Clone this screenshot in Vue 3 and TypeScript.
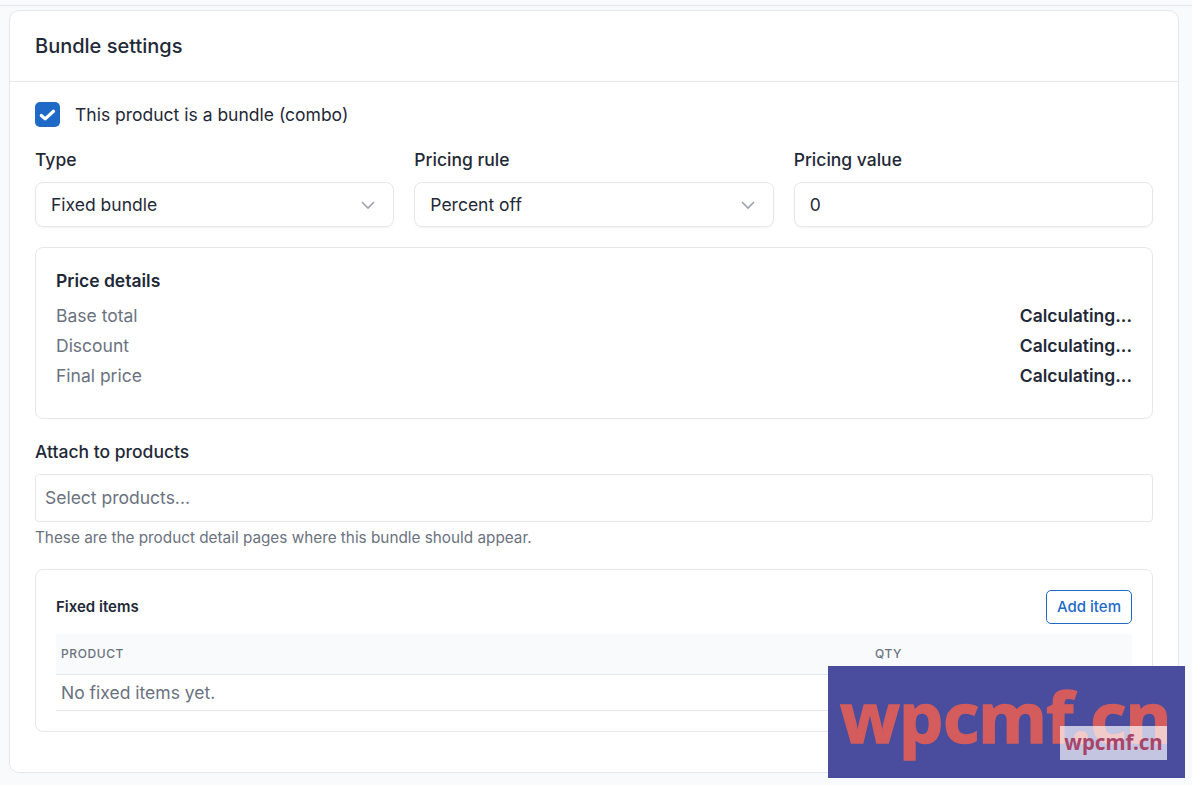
<script setup lang="ts">
const rows: string[] = ['Base total', 'Discount', 'Final price']
</script>

<template>
  <div class="page">
    <div class="topbar"></div>
    <section class="card">
      <header class="card-head"><h2>Bundle settings</h2></header>
      <div class="card-body">
        <label class="check">
          <span class="box">
            <svg width="25" height="25" viewBox="0 0 25 25"><path d="M6.3 13.5l3.9 3.4 8.3-7.6" fill="none" stroke="#fff" stroke-width="3.2" stroke-linecap="round" stroke-linejoin="round"/></svg>
          </span>
          <span>This product is a bundle (combo)</span>
        </label>
        <div class="fields">
          <div class="field">
            <div class="label">Type</div>
            <div class="control">
              <span>Fixed bundle</span>
              <svg class="chev" width="16" height="16" viewBox="0 0 16 16"><path d="M2 5l6 6 6-6" fill="none" stroke="#9ca3af" stroke-width="1.6"/></svg>
            </div>
          </div>
          <div class="field">
            <div class="label">Pricing rule</div>
            <div class="control">
              <span>Percent off</span>
              <svg class="chev" width="16" height="16" viewBox="0 0 16 16"><path d="M2 5l6 6 6-6" fill="none" stroke="#9ca3af" stroke-width="1.6"/></svg>
            </div>
          </div>
          <div class="field">
            <div class="label">Pricing value</div>
            <div class="control"><span>0</span></div>
          </div>
        </div>
        <div class="price">
          <div class="price-title">Price details</div>
          <div v-for="r in rows" :key="r" class="price-row">
            <span class="muted">{{ r }}</span>
            <strong>Calculating...</strong>
          </div>
        </div>
        <div class="label attach">Attach to products</div>
        <div class="picker">Select products...</div>
        <p class="hint">These are the product detail pages where this bundle should appear.</p>
        <div class="items">
          <div class="items-head">
            <span class="items-title">Fixed items</span>
            <button class="add" type="button">Add item</button>
          </div>
          <div class="thead"><span>PRODUCT</span><span>QTY</span></div>
          <div class="empty">No fixed items yet.</div>
        </div>
      </div>
    </section>
    <div class="mark">
      <span class="mark-big">wpcmf.cn</span>
      <span class="mark-small">wpcmf.cn</span>
    </div>
  </div>
</template>

<style>
html, body { margin: 0; background: #f9fafb; }
</style>

<style scoped>
.page {
  position: relative;
  height: 785px;
  overflow: hidden;
  background: #f9fafb;
  font-family: Inter, "Noto Sans", sans-serif;
  color: #1f2937;
}
.topbar { height: 5px; border-bottom: 1px solid #e5e7eb; }
.card {
  box-sizing: border-box;
  width: 1170px;
  height: 763px;
  margin: 4px 0 0 9px;
  background: #fff;
  border: 1px solid #e5e7eb;
  border-radius: 10px;
}
.card-head {
  box-sizing: border-box;
  height: 71px;
  padding: 0 25px;
  display: flex;
  align-items: center;
  border-bottom: 1px solid #e5e7eb;
}
h2 { margin: 0; font-size: 20px; font-weight: 500; color: #1f2937; }
.card-body { padding: 20px 25px 0; }
.check { display: flex; align-items: center; gap: 15px; height: 25px; font-size: 17.5px; }
.box { width: 25px; height: 25px; border-radius: 5px; background: #1f6ac6; display: block; }
.box svg { display: block; }
.fields { display: grid; grid-template-columns: repeat(3, 1fr); gap: 20px; margin-top: 21px; }
.label { font-size: 17.5px; font-weight: 500; line-height: 24px; color: #1f2937; }
.control {
  box-sizing: border-box;
  height: 45px;
  margin-top: 10px;
  padding: 0 15px;
  display: flex;
  align-items: center;
  justify-content: space-between;
  border: 1px solid #e5e7eb;
  border-radius: 8px;
  box-shadow: 0 1px 2px rgba(16, 24, 40, 0.05);
  font-size: 17.5px;
}
.chev { margin-right: 2px; }
.price {
  box-sizing: border-box;
  height: 172px;
  margin-top: 20px;
  padding: 20px;
  border: 1px solid #e5e7eb;
  border-radius: 8px;
}
.price-title { font-size: 17.5px; font-weight: 600; line-height: 26px; color: #1f2937; margin-bottom: 7px; }
.price-row { display: flex; justify-content: space-between; font-size: 17.5px; line-height: 30px; }
.muted { color: #6b7280; }
.price-row strong { font-weight: 600; color: #1f2937; }
.attach { margin-top: 21px; }
.picker {
  box-sizing: border-box;
  height: 48px;
  margin-top: 10px;
  padding: 0 9px 2px;
  display: flex;
  align-items: center;
  border: 1px solid #e5e7eb;
  border-radius: 4px;
  font-size: 17.5px;
  color: #6b7280;
}
.hint { margin: 6px 0 0; font-size: 15.3px; line-height: 20px; color: #6b7280; }
.items {
  box-sizing: border-box;
  height: 163px;
  margin-top: 21px;
  padding: 20px;
  border: 1px solid #e5e7eb;
  border-radius: 8px;
}
.items-head { display: flex; justify-content: space-between; align-items: center; height: 34px; }
.items-title { font-size: 15px; font-weight: 600; line-height: 20px; color: #1f2937; }
.add {
  box-sizing: border-box;
  height: 34px;
  width: 86px;
  padding: 0 0 1px;
  background: #fff;
  border: 1px solid #1f6ac6;
  border-radius: 5px;
  color: #1f6ac6;
  font: 500 15px Inter, sans-serif;
}
.thead {
  box-sizing: border-box;
  height: 41px;
  margin-top: 10px;
  padding: 0 0 2px 5px;
  display: grid;
  grid-template-columns: 814px 1fr;
  align-items: center;
  background: #f9fafb;
  border-bottom: 1px solid #e5e7eb;
  font-size: 12px;
  font-weight: 500;
  letter-spacing: 0.6px;
  color: #6b7280;
}
.empty {
  box-sizing: border-box;
  height: 36px;
  padding-left: 5px;
  display: flex;
  align-items: center;
  border-bottom: 1px solid #e5e7eb;
  font-size: 17.5px;
  color: #6b7280;
}
.mark {
  position: absolute;
  left: 828px;
  top: 666px;
  width: 357px;
  height: 112px;
  background: #4a4d9e;
  overflow: hidden;
}
.mark-big {
  position: absolute;
  left: 12px;
  top: 0;
  font: 700 70px/100px "Noto Sans", sans-serif;
  letter-spacing: -0.6px;
  -webkit-text-stroke: 1.5px #d45c5c;
  color: #d45c5c;
  white-space: nowrap;
}
.mark-small {
  position: absolute;
  left: 232px;
  top: 60px;
  width: 107px;
  height: 34px;
  background: rgba(255, 255, 255, 0.68);
  color: #a8446a;
  font: 700 20.5px/33px "Noto Sans", sans-serif;
  text-align: center;
  white-space: nowrap;
}
</style>
